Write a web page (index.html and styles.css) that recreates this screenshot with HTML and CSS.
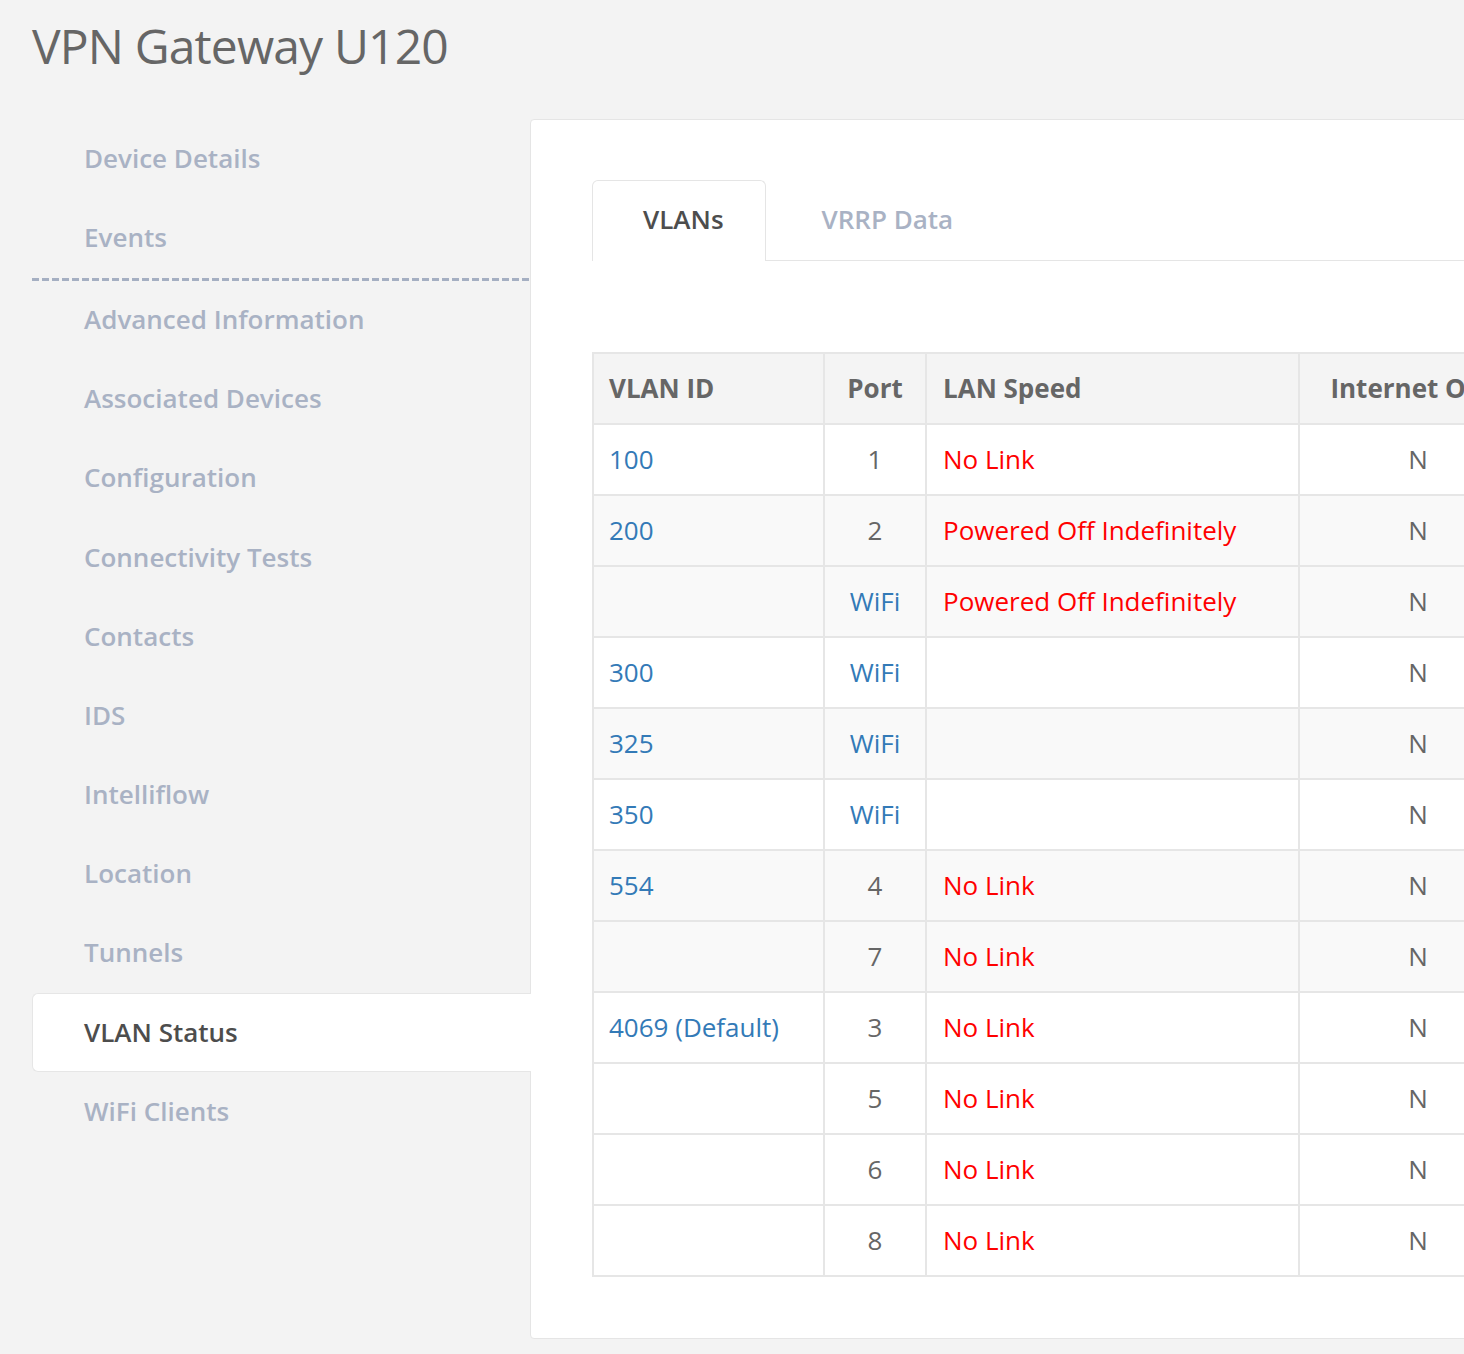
FILE: index.html
```html
<!DOCTYPE html>
<html lang="en">
<head>
<meta charset="utf-8">
<title>VPN Gateway U120</title>
<link rel="stylesheet" href="styles.css">
</head>
<body>
<h1 class="page-title">VPN Gateway U120</h1>
<div class="layout">
  <nav class="sidenav">
    <a class="nav-item">Device Details</a>
    <a class="nav-item">Events</a>
    <div class="nav-sep"></div>
    <a class="nav-item">Advanced Information</a>
    <a class="nav-item">Associated Devices</a>
    <a class="nav-item">Configuration</a>
    <a class="nav-item">Connectivity Tests</a>
    <a class="nav-item">Contacts</a>
    <a class="nav-item">IDS</a>
    <a class="nav-item">Intelliflow</a>
    <a class="nav-item">Location</a>
    <a class="nav-item">Tunnels</a>
    <a class="nav-item active">VLAN Status</a>
    <a class="nav-item">WiFi Clients</a>
  </nav>
  <main class="panel">
    <ul class="tabs">
      <li class="tab active">VLANs</li>
      <li class="tab">VRRP Data</li>
    </ul>
    <div class="tab-content">
      <div class="vlan-table">
        <div class="row head">
          <div class="cell">VLAN ID</div>
          <div class="cell center">Port</div>
          <div class="cell">LAN Speed</div>
          <div class="cell center">Internet Only</div>
        </div>
        <div class="row">
          <div class="cell"><a class="link">100</a></div>
          <div class="cell center">1</div>
          <div class="cell red">No Link</div>
          <div class="cell center">N</div>
        </div>
        <div class="row alt">
          <div class="cell"><a class="link">200</a></div>
          <div class="cell center">2</div>
          <div class="cell red">Powered Off Indefinitely</div>
          <div class="cell center">N</div>
        </div>
        <div class="row alt">
          <div class="cell"></div>
          <div class="cell center"><a class="link">WiFi</a></div>
          <div class="cell red">Powered Off Indefinitely</div>
          <div class="cell center">N</div>
        </div>
        <div class="row">
          <div class="cell"><a class="link">300</a></div>
          <div class="cell center"><a class="link">WiFi</a></div>
          <div class="cell"></div>
          <div class="cell center">N</div>
        </div>
        <div class="row alt">
          <div class="cell"><a class="link">325</a></div>
          <div class="cell center"><a class="link">WiFi</a></div>
          <div class="cell"></div>
          <div class="cell center">N</div>
        </div>
        <div class="row">
          <div class="cell"><a class="link">350</a></div>
          <div class="cell center"><a class="link">WiFi</a></div>
          <div class="cell"></div>
          <div class="cell center">N</div>
        </div>
        <div class="row alt">
          <div class="cell"><a class="link">554</a></div>
          <div class="cell center">4</div>
          <div class="cell red">No Link</div>
          <div class="cell center">N</div>
        </div>
        <div class="row alt">
          <div class="cell"></div>
          <div class="cell center">7</div>
          <div class="cell red">No Link</div>
          <div class="cell center">N</div>
        </div>
        <div class="row">
          <div class="cell"><a class="link">4069 (Default)</a></div>
          <div class="cell center">3</div>
          <div class="cell red">No Link</div>
          <div class="cell center">N</div>
        </div>
        <div class="row">
          <div class="cell"></div>
          <div class="cell center">5</div>
          <div class="cell red">No Link</div>
          <div class="cell center">N</div>
        </div>
        <div class="row">
          <div class="cell"></div>
          <div class="cell center">6</div>
          <div class="cell red">No Link</div>
          <div class="cell center">N</div>
        </div>
        <div class="row">
          <div class="cell"></div>
          <div class="cell center">8</div>
          <div class="cell red">No Link</div>
          <div class="cell center">N</div>
        </div>
      </div>
    </div>
  </main>
</div>
</body>
</html>
```
FILE: styles.css
```css
html, body {
  margin: 0;
  padding: 0;
  overflow: hidden;
}
body {
  background: #f3f3f3;
  font-family: "Open Sans", "Noto Sans", "Liberation Sans", sans-serif;
  color: #666;
  padding-left: 32px;
  min-height: 1354px;
  box-sizing: border-box;
}
.page-title {
  margin: 13px 0 40px;
  font-size: 48px;
  font-weight: 400;
  line-height: 66px;
  letter-spacing: -0.85px;
  color: #666;
  white-space: nowrap;
}
.layout {
  display: flex;
  align-items: flex-start;
}
.sidenav {
  flex: none;
  width: 498px;
  display: flex;
  flex-direction: column;
}
.nav-item {
  box-sizing: border-box;
  height: 79.2px;
  display: flex;
  align-items: center;
  padding-left: 52px;
  padding-bottom: 2px;
  font-size: 26px;
  font-weight: 600;
  color: #a9b2c4;
  white-space: nowrap;
}
.nav-sep {
  height: 3px;
  margin-top: 0.5px;
  margin-bottom: -0.5px;
  background: repeating-linear-gradient(90deg, #a5afc2 0 7px, transparent 7px 10px);
}
.nav-item.active {
  position: relative;
  z-index: 1;
  margin-right: -1px;
  background: #fff;
  color: #4d4d4d;
  border: 1px solid #e6e6e6;
  border-right: 0;
  border-radius: 6px 0 0 6px;
  padding-left: 51px;
}
.panel {
  position: relative;
  flex: none;
  width: 1200px;
  background: #fff;
  border: 1px solid #e5e5e5;
  border-radius: 4px 0 0 4px;
  padding: 60px 61px 61px;
}
.tabs {
  list-style: none;
  margin: 0;
  padding: 0;
  display: flex;
  border-bottom: 1px solid #e5e5e5;
}
.tab {
  box-sizing: border-box;
  height: 80px;
  display: flex;
  align-items: center;
  padding: 0 41px 3px 50px;
  border: 1px solid transparent;
  border-bottom: 0;
  font-size: 26px;
  font-weight: 600;
  color: #a9b2c4;
  white-space: nowrap;
}
.tab + .tab {
  margin-left: 5px;
}
.tab.active {
  height: 81px;
  padding-bottom: 4px;
  margin-bottom: -1px;
  background: #fff;
  color: #4d4d4d;
  border-color: #e5e5e5;
  border-radius: 6px 6px 0 0;
}
.tab-content {
  padding-top: 91px;
}
.vlan-table {
  display: grid;
  grid-template-columns: 231px 102px 373px 238px;
  width: max-content;
  border-top: 2px solid #e6e6e6;
  border-left: 2px solid #e6e6e6;
}
.row {
  display: contents;
}
.cell {
  box-sizing: border-box;
  height: 71px;
  display: flex;
  align-items: center;
  padding: 0 15px 2px;
  border-right: 2px solid #e6e6e6;
  border-bottom: 2px solid #e6e6e6;
  font-size: 26px;
  color: #666;
  white-space: nowrap;
  background: #fff;
}
.cell.red {
  padding-left: 16px;
}
.cell.center {
  justify-content: center;
}
.row.head .cell {
  background: #f4f4f4;
  font-weight: 700;
  color: #666;
}
.row.head .cell:nth-child(3) {
  padding-left: 16px;
}
.row.alt .cell {
  background: #f9f9f9;
}
.link {
  color: #337ab7;
  text-decoration: none;
}
.cell.red {
  color: #ff0000;
}
```
